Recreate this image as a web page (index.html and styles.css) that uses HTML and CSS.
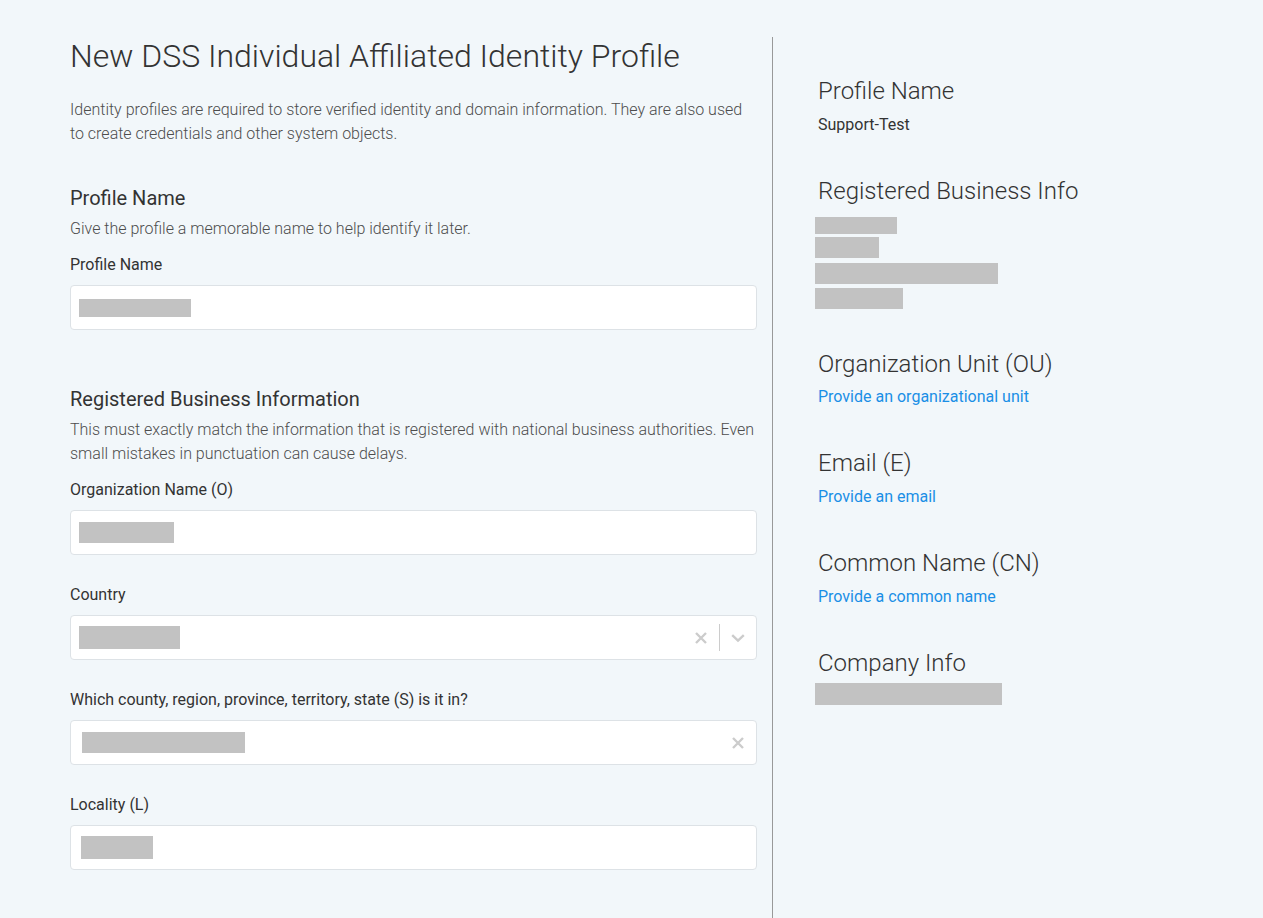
FILE: index.html
```html
<!doctype html>
<html lang="en">
<head>
  <meta charset="utf-8" />
  <meta name="viewport" content="width=device-width,initial-scale=1" />
  <title>New DSS Individual Affiliated Identity Profile</title>
  <link rel="stylesheet" href="styles.css">
</head>
<body>
  <div class="page">
    <main class="form">
      <h1>New DSS Individual Affiliated Identity Profile</h1>
      <p class="intro">Identity profiles are required to store verified identity and domain information. They are also used to create credentials and other system objects.</p>

      <section class="section">
        <h2>Profile Name</h2>
        <p class="help">Give the profile a memorable name to help identify it later.</p>
        <div class="field">
          <label>Profile Name</label>
          <div class="input"><span class="redact" style="width:112px;height:18px"></span></div>
        </div>
      </section>

      <section class="section">
        <h2>Registered Business Information</h2>
        <p class="help">This must exactly match the information that is registered with national business authorities. Even small mistakes in punctuation can cause delays.</p>
        <div class="field">
          <label>Organization Name (O)</label>
          <div class="input"><span class="redact" style="width:95px;height:21px"></span></div>
        </div>
        <div class="field">
          <label>Country</label>
          <div class="input select">
            <div class="value"><span class="redact" style="width:101px;height:23px"></span></div>
            <div class="indicator">
              <svg viewBox="0 0 20 20" width="20" height="20"><path d="M5 5 L15 15 M15 5 L5 15" /></svg>
            </div>
            <span class="sep"></span>
            <div class="indicator">
              <svg viewBox="0 0 20 20" width="20" height="20"><path d="M4.2 7.2 L10 12.6 L15.8 7.2" /></svg>
            </div>
          </div>
        </div>
        <div class="field">
          <label>Which county, region, province, territory, state (S) is it in?</label>
          <div class="input select">
            <div class="value"><span class="redact" style="width:163px;height:21px;margin-left:3px"></span></div>
            <div class="indicator">
              <svg viewBox="0 0 20 20" width="20" height="20"><path d="M5 5 L15 15 M15 5 L5 15" /></svg>
            </div>
          </div>
        </div>
        <div class="field">
          <label>Locality (L)</label>
          <div class="input"><span class="redact" style="width:72px;height:23px;margin-left:2px"></span></div>
        </div>
      </section>
    </main>

    <aside class="summary">
      <div class="block">
        <h3>Profile Name</h3>
        <div class="text">Support-Test</div>
      </div>
      <div class="block biz">
        <h3>Registered Business Info</h3>
        <div class="redact r1" style="width:82px;height:17px"></div>
        <div class="redact r2" style="width:64px;height:21px"></div>
        <div class="redact r3" style="width:183px;height:21px"></div>
        <div class="redact r4" style="width:88px;height:21px"></div>
      </div>
      <div class="block">
        <h3>Organization Unit (OU)</h3>
        <a class="text link" href="#">Provide an organizational unit</a>
      </div>
      <div class="block">
        <h3>Email (E)</h3>
        <a class="text link" href="#">Provide an email</a>
      </div>
      <div class="block">
        <h3>Common Name (CN)</h3>
        <a class="text link" href="#">Provide a common name</a>
      </div>
      <div class="block">
        <h3>Company Info</h3>
        <div class="redact r5" style="width:187px;height:22px"></div>
      </div>
    </aside>
  </div>
</body>
</html>
```

FILE: styles.css
```css
:root { --bg:#f2f7fa; --text:#333; --muted:#4d4d4d; --line:#dde2e6; --redact:#c2c2c2; --link:#1a8fe6; }
html, body {
  margin: 0; min-height: 100%;
  font-family: Roboto, "Liberation Sans", sans-serif;
  background: var(--bg); color: var(--text);
}
.page { display:flex; min-height:100vh; box-sizing:border-box; padding:37px 0 0 70px; }

/* form column */
.form { width:687px; padding-right:15px; flex:none; }
h1 { font-size:32px; font-weight:300; line-height:1.2; margin:0; color:#333; }
.intro { font-size:16px; font-weight:300; line-height:24px; margin:23px 0 40px; color:var(--muted); }
.section { padding-bottom:29px; }
h2 { font-size:20px; font-weight:400; line-height:24px; margin:0 0 7px; color:#333; }
.help { font-size:16px; font-weight:300; line-height:24px; margin:0 0 12px; color:var(--muted); }
.field { margin-bottom:28px; }
label { display:block; font-size:16px; line-height:24px; margin-bottom:8px; color:#333; }
.input {
  display:flex; align-items:center;
  height:45px; box-sizing:border-box; padding:0 8px;
  background:#fff; border:1px solid var(--line); border-radius:4px;
}
.redact { display:block; background:var(--redact); }

/* select */
.select { padding:0; }
.select .value { flex:1; display:flex; align-items:center; padding-left:8px; }
.indicator { display:flex; align-items:center; padding:8px; }
.indicator svg { fill:none; stroke:#ccc; stroke-width:2.4; }
.sep { width:1px; height:27px; background:#ccc; }

/* summary column */
.summary { flex:none; border-left:1px solid #999; padding:40px 0 0 45px; }
.block { margin-bottom:40px; }
.block.biz { margin-bottom:41px; }
h3 { font-size:24px; font-weight:300; line-height:1.2; margin:0 0 7px; color:#333; }
.text { display:block; font-size:16px; line-height:24px; color:#333; }
.link { color:var(--link); text-decoration:none; }
.summary .redact { margin-left:-3px; }
.r1 { margin-top:11px; }
.r2 { margin-top:3px; }
.r3 { margin-top:5px; }
.r4 { margin-top:4px; }
.r5 { margin-top:-2px; }
```
